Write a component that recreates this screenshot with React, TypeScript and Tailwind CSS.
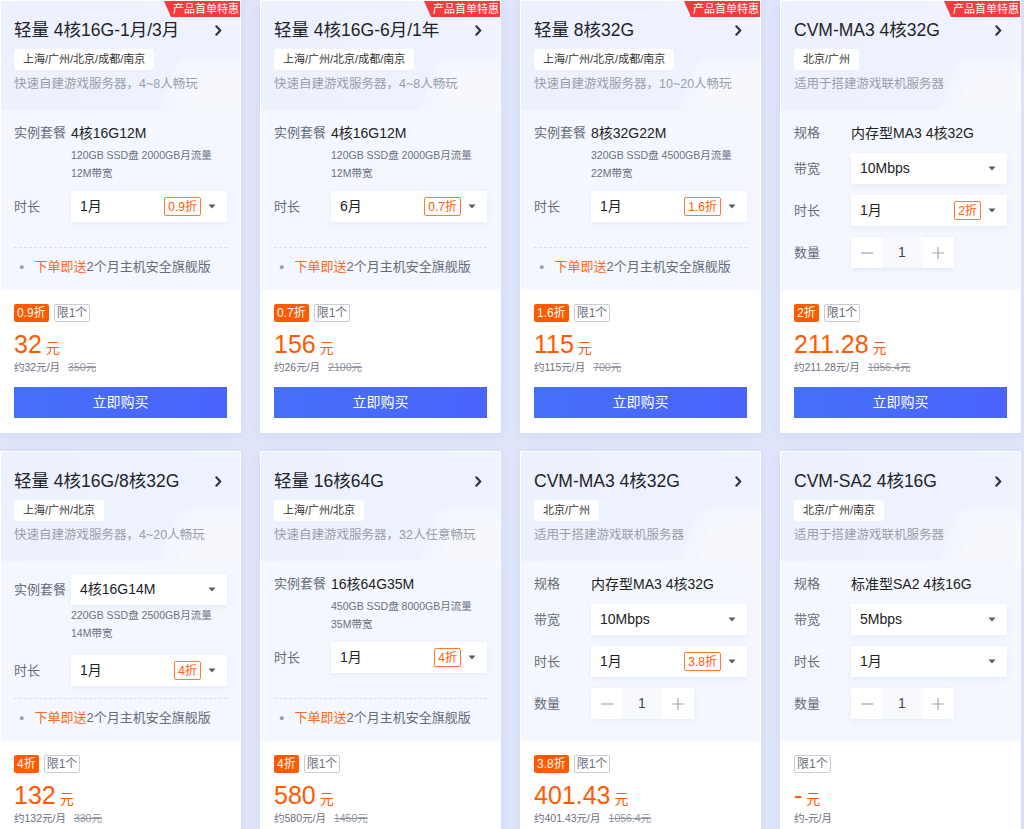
import React from "react";

type CardData = {
  title: string;
  region: string;
  desc: string;
  kind: "light" | "lightSelect" | "cvm";
  pkg?: string;
  sub?: string[];
  spec?: string;
  bw?: string;
  dur: string;
  disc?: string;
  price: string;
  per: string;
  orig?: string;
  hot?: boolean;
};

const cards: CardData[] = [
  {
    title: "轻量 4核16G-1月/3月",
    region: "上海/广州/北京/成都/南京",
    desc: "快速自建游戏服务器，4~8人畅玩",
    kind: "light",
    pkg: "4核16G12M",
    sub: ["120GB SSD盘 2000GB月流量", "12M带宽"],
    dur: "1月",
    disc: "0.9折",
    price: "32",
    per: "约32元/月",
    orig: "350元",
    hot: true,
  },
  {
    title: "轻量 4核16G-6月/1年",
    region: "上海/广州/北京/成都/南京",
    desc: "快速自建游戏服务器，4~8人畅玩",
    kind: "light",
    pkg: "4核16G12M",
    sub: ["120GB SSD盘 2000GB月流量", "12M带宽"],
    dur: "6月",
    disc: "0.7折",
    price: "156",
    per: "约26元/月",
    orig: "2100元",
    hot: true,
  },
  {
    title: "轻量 8核32G",
    region: "上海/广州/北京/成都/南京",
    desc: "快速自建游戏服务器，10~20人畅玩",
    kind: "light",
    pkg: "8核32G22M",
    sub: ["320GB SSD盘 4500GB月流量", "22M带宽"],
    dur: "1月",
    disc: "1.6折",
    price: "115",
    per: "约115元/月",
    orig: "700元",
    hot: true,
  },
  {
    title: "CVM-MA3 4核32G",
    region: "北京/广州",
    desc: "适用于搭建游戏联机服务器",
    kind: "cvm",
    spec: "内存型MA3 4核32G",
    bw: "10Mbps",
    dur: "1月",
    disc: "2折",
    price: "211.28",
    per: "约211.28元/月",
    orig: "1056.4元",
    hot: true,
  },
  {
    title: "轻量 4核16G/8核32G",
    region: "上海/广州/北京",
    desc: "快速自建游戏服务器，4~20人畅玩",
    kind: "lightSelect",
    pkg: "4核16G14M",
    sub: ["220GB SSD盘 2500GB月流量", "14M带宽"],
    dur: "1月",
    disc: "4折",
    price: "132",
    per: "约132元/月",
    orig: "330元",
  },
  {
    title: "轻量 16核64G",
    region: "上海/广州/北京",
    desc: "快速自建游戏服务器，32人任意畅玩",
    kind: "light",
    pkg: "16核64G35M",
    sub: ["450GB SSD盘 8000GB月流量", "35M带宽"],
    dur: "1月",
    disc: "4折",
    price: "580",
    per: "约580元/月",
    orig: "1450元",
  },
  {
    title: "CVM-MA3 4核32G",
    region: "北京/广州",
    desc: "适用于搭建游戏联机服务器",
    kind: "cvm",
    spec: "内存型MA3 4核32G",
    bw: "10Mbps",
    dur: "1月",
    disc: "3.8折",
    price: "401.43",
    per: "约401.43元/月",
    orig: "1056.4元",
  },
  {
    title: "CVM-SA2 4核16G",
    region: "北京/广州/南京",
    desc: "适用于搭建游戏联机服务器",
    kind: "cvm",
    spec: "标准型SA2 4核16G",
    bw: "5Mbps",
    dur: "1月",
    price: "-",
    per: "约-元/月",
  },
];

function Caret() {
  return (
    <svg width="8" height="5" viewBox="0 0 8 5" className="shrink-0">
      <path d="M0.5 0.5 L7.5 0.5 L4 4.5 Z" fill="#555a66" />
    </svg>
  );
}

function Chevron() {
  return (
    <svg width="7" height="11" viewBox="0 0 7 11" className="mr-[5px] shrink-0">
      <path d="M1.3 1.3 L5.3 5.5 L1.3 9.7" fill="none" stroke="#2b2f38" strokeWidth="2" strokeLinecap="round" strokeLinejoin="round" />
    </svg>
  );
}

function Select({ value, disc }: { value: string; disc?: string }) {
  return (
    <div className="flex h-[31px] flex-1 items-center bg-white pl-[9px] pr-[11px] text-[14px] text-[#222] shadow-[0_2px_6px_rgba(40,70,160,0.07)]">
      <span className="flex-1">{value}</span>
      {disc && (
        <span className="mr-[7px] flex h-[19px] items-center rounded-[2px] border border-[#ff7a33] bg-white px-[3px] text-[12px] text-[#ff5a00]">
          {disc}
        </span>
      )}
      <Caret />
    </div>
  );
}

function Label({ children }: { children: React.ReactNode }) {
  return <div className="w-[57px] shrink-0 text-[13px] text-[#666b78]">{children}</div>;
}

function Deco() {
  return (
    <svg className="absolute bottom-0 right-0" width="110" height="62" viewBox="0 0 110 62">
      <path d="M30 62 L46 18 Q50 10 60 10 L110 10 L110 62 Z" fill="#ffffff" opacity="0.3" />
      <path d="M48 62 L60 28 Q63 22 70 22 L110 22 L110 62 Z" fill="#ffffff" opacity="0.25" />
    </svg>
  );
}

function Card({ d }: { d: CardData }) {
  return (
    <div className="relative flex h-[433px] flex-col overflow-hidden border border-white bg-white shadow-[0_2px_10px_rgba(60,80,170,0.08)]">
      <div className="relative h-[109px] bg-gradient-to-r from-[#edf1fd] to-[#eff3fe] px-[13px] pt-[17px]">
        <Deco />
        <div className="relative flex h-[24px] items-center justify-between">
          <span className="text-[17.5px] leading-[24px] text-[#1f2329]">{d.title}</span>
          <Chevron />
        </div>
        <div className="relative mt-[7px] inline-flex h-[21px] items-center rounded-[3px] bg-white px-[9px] text-[11px] text-[#333]">
          {d.region}
        </div>
        <div className="relative mt-[5px] text-[12.5px] leading-[18px] text-[#9a9ea8]">{d.desc}</div>
      </div>

      <div className="flex h-[180px] flex-col bg-[#f4f7fe] px-[13px] pt-[13px]">
        {d.kind === "light" && (
          <>
            <div className="flex items-center leading-[20px]">
              <Label>实例套餐</Label>
              <span className="text-[14px] text-[#222]">{d.pkg}</span>
            </div>
            <div className="mt-[3px] pl-[57px] text-[10.5px] leading-[18px] text-[#6b7080]">
              {d.sub!.map((s) => (
                <div key={s}>{s}</div>
              ))}
            </div>
            <div className="mt-[9px] flex items-center">
              <Label>时长</Label>
              <Select value={d.dur} disc={d.disc} />
            </div>
          </>
        )}
        {d.kind === "lightSelect" && (
          <>
            <div className="flex items-center">
              <Label>实例套餐</Label>
              <Select value={d.pkg!} />
            </div>
            <div className="mt-[1px] pl-[57px] text-[10.5px] leading-[18px] text-[#6b7080]">
              {d.sub!.map((s) => (
                <div key={s}>{s}</div>
              ))}
            </div>
            <div className="mt-[13px] flex items-center">
              <Label>时长</Label>
              <Select value={d.dur} disc={d.disc} />
            </div>
          </>
        )}
        {d.kind === "cvm" && (
          <>
            <div className="flex items-center leading-[20px]">
              <Label>规格</Label>
              <span className="text-[14px] text-[#222]">{d.spec}</span>
            </div>
            <div className="mt-[10px] flex items-center">
              <Label>带宽</Label>
              <Select value={d.bw!} />
            </div>
            <div className="mt-[11px] flex items-center">
              <Label>时长</Label>
              <Select value={d.dur} disc={d.disc} />
            </div>
            <div className="mt-[11px] flex items-center">
              <Label>数量</Label>
              <div className="flex h-[31px] shadow-[0_2px_6px_rgba(40,70,160,0.07)]">
                <div className="flex w-[31px] items-center justify-center bg-white">
                  <svg width="12" height="12" viewBox="0 0 12 12">
                    <path d="M0 6 H12" stroke="#a3a7b2" strokeWidth="1.2" />
                  </svg>
                </div>
                <div className="flex w-[40px] items-center justify-center bg-[#f7f9fd] text-[14px] text-[#444]">1</div>
                <div className="flex w-[32px] items-center justify-center bg-white">
                  <svg width="12" height="12" viewBox="0 0 12 12">
                    <path d="M0 6 H12 M6 0 V12" stroke="#a3a7b2" strokeWidth="1.2" />
                  </svg>
                </div>
              </div>
            </div>
          </>
        )}
        {d.kind !== "cvm" && (
          <div className="mt-auto flex items-center border-t border-dashed border-[#d9dde8] pb-[14px] pt-[10px] text-[13px] leading-[18px]">
            <span className="ml-[5px] text-[9px] text-[#9a9ea8]">●</span>
            <span className="ml-[10px] text-[#ff6a1a]">下单即送</span>
            <span className="text-[#666b78]">2个月主机安全旗舰版</span>
          </div>
        )}
      </div>

      <div className="flex flex-1 flex-col bg-white px-[13px] pt-[14px]">
        <div className="flex h-[18px] gap-[5px]">
          {d.disc && (
            <span className="flex h-[18px] items-center rounded-[2px] bg-[#ff5a00] px-[3px] text-[12px] text-white">
              {d.disc}
            </span>
          )}
          <span className="flex h-[18px] items-center rounded-[2px] border border-[#c9ccd6] bg-white px-[2px] text-[12px] text-[#6b7080]">
            限1个
          </span>
        </div>
        <div className="mt-[7px] flex h-[30px] items-baseline text-[#ff5a00]">
          <span className="text-[25px] leading-[30px]">{d.price}</span>
          <span className="ml-[4px] text-[14px]">元</span>
        </div>
        <div className="mt-[1px] flex h-[16px] items-center gap-[8px] text-[10.5px] text-[#6b7080]">
          <span>{d.per}</span>
          {d.orig && <span className="text-[#8f94a0] line-through">{d.orig}</span>}
        </div>
        <button className="mt-[11px] h-[31px] w-full bg-gradient-to-r from-[#4670f9] to-[#4a63fc] text-[14px] text-white">
          立即购买
        </button>
      </div>

      {d.hot && (
        <div className="absolute right-0 top-0 h-[16px] w-[76px] bg-[#f53c3c] pl-[9px] text-[11px] leading-[16px] text-white [clip-path:polygon(0_0,100%_0,100%_100%,7px_100%)]">
          产品首单特惠
        </div>
      )}
    </div>
  );
}

export default function App() {
  return (
    <div className="min-h-screen w-full overflow-hidden bg-[#dfe5fa] font-['Liberation_Sans','Noto_Sans_CJK_SC',sans-serif]">
      <div className="grid grid-cols-[repeat(4,241px)] gap-x-[19px] gap-y-[18px]">
        {cards.map((c, i) => (
          <Card key={i} d={c} />
        ))}
      </div>
    </div>
  );
}
